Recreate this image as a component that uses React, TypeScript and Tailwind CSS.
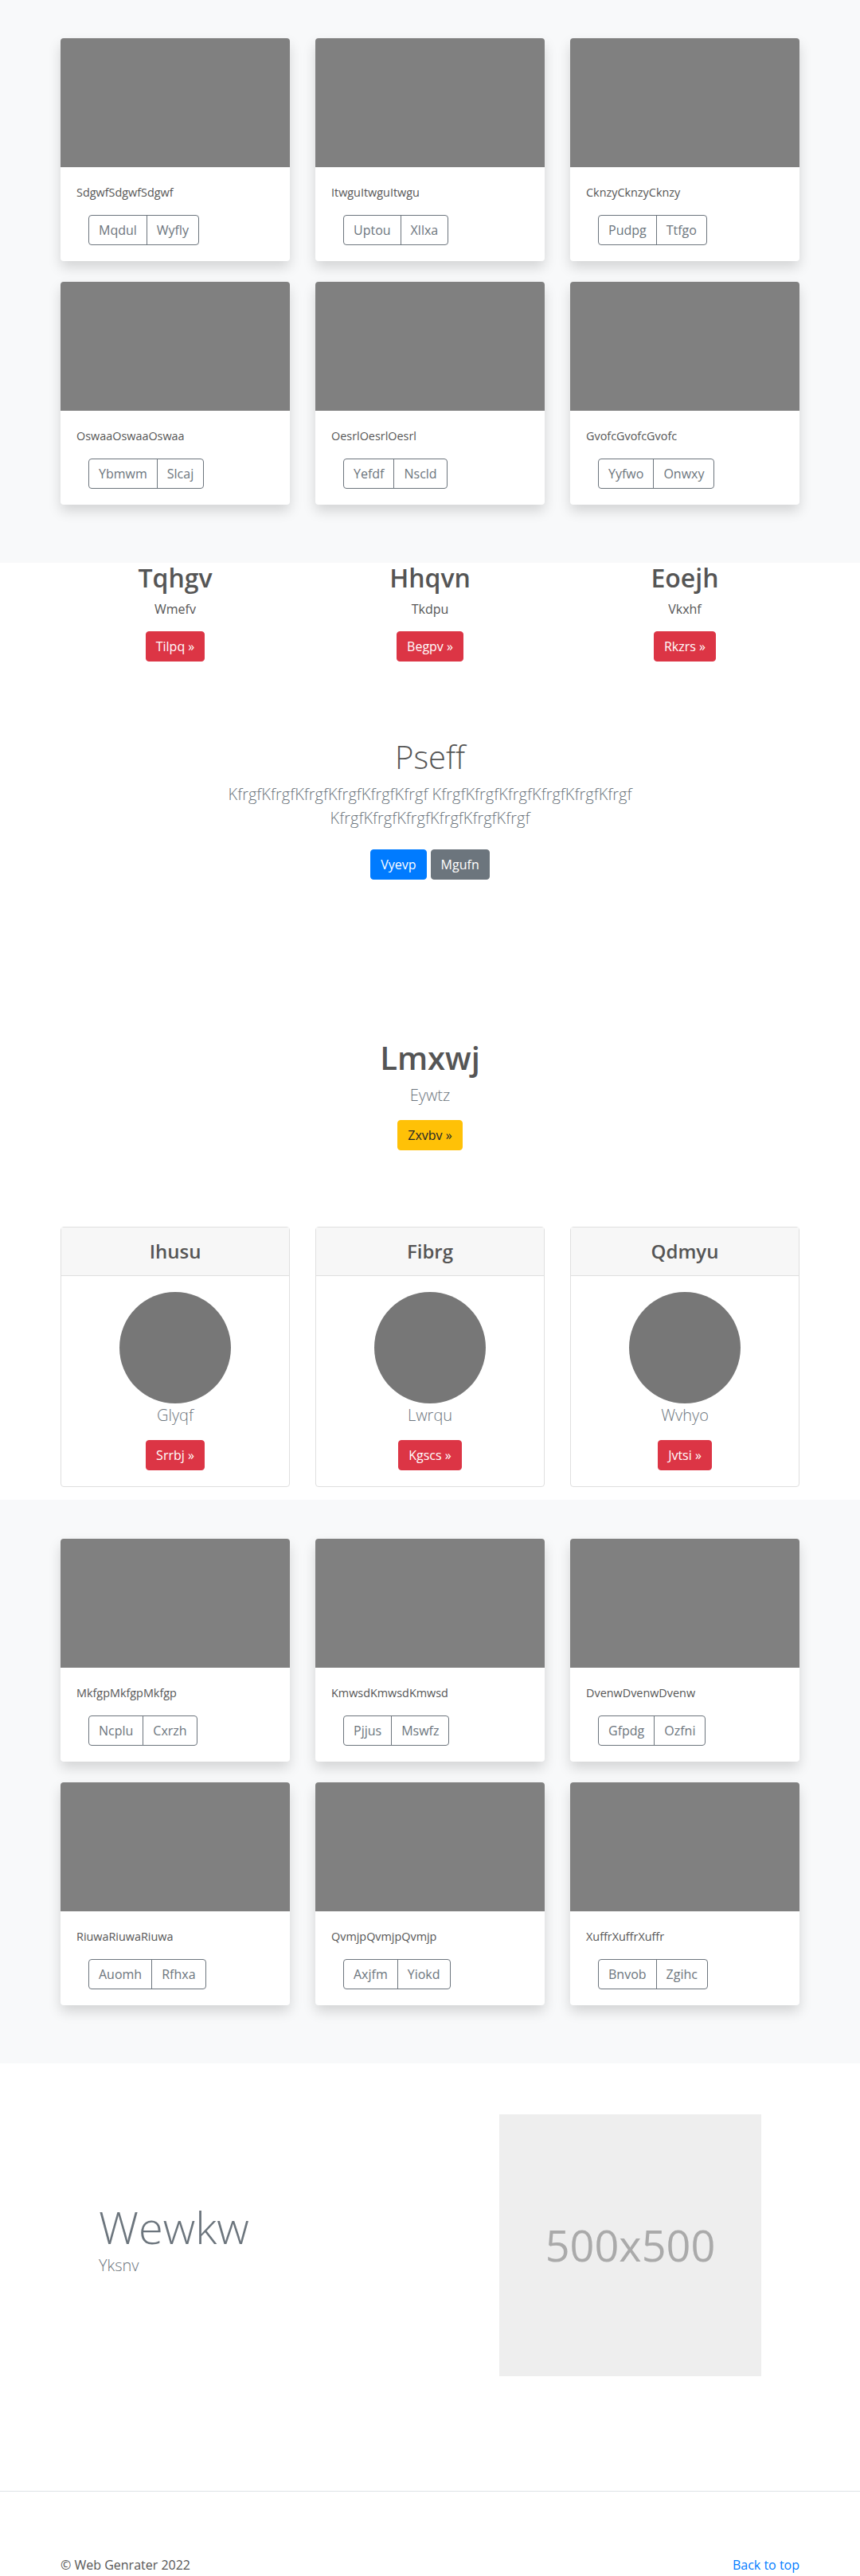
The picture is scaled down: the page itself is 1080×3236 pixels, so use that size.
type Album = { title: string; actions: [string, string] };

const albumTop: Album[] = [
  { title: "SdgwfSdgwfSdgwf", actions: ["Mqdul", "Wyfly"] },
  { title: "ItwguItwguItwgu", actions: ["Uptou", "Xllxa"] },
  { title: "CknzyCknzyCknzy", actions: ["Pudpg", "Ttfgo"] },
  { title: "OswaaOswaaOswaa", actions: ["Ybmwm", "Slcaj"] },
  { title: "OesrlOesrlOesrl", actions: ["Yefdf", "Nscld"] },
  { title: "GvofcGvofcGvofc", actions: ["Yyfwo", "Onwxy"] },
];

const albumBottom: Album[] = [
  { title: "MkfgpMkfgpMkfgp", actions: ["Ncplu", "Cxrzh"] },
  { title: "KmwsdKmwsdKmwsd", actions: ["Pjjus", "Mswfz"] },
  { title: "DvenwDvenwDvenw", actions: ["Gfpdg", "Ozfni"] },
  { title: "RiuwaRiuwaRiuwa", actions: ["Auomh", "Rfhxa"] },
  { title: "QvmjpQvmjpQvmjp", actions: ["Axjfm", "Yiokd"] },
  { title: "XuffrXuffrXuffr", actions: ["Bnvob", "Zgihc"] },
];

const features = [
  { title: "Tqhgv", text: "Wmefv", cta: "Tilpq »" },
  { title: "Hhqvn", text: "Tkdpu", cta: "Begpv »" },
  { title: "Eoejh", text: "Vkxhf", cta: "Rkzrs »" },
];

const people = [
  { title: "Ihusu", text: "Glyqf", cta: "Srrbj »" },
  { title: "Fibrg", text: "Lwrqu", cta: "Kgscs »" },
  { title: "Qdmyu", text: "Wvhyo", cta: "Jvtsi »" },
];

// bootstrap-ish .btn: 1px border, 6px/12px padding, 16px text -> 38px tall
const btn = "inline-block rounded border px-3 py-1.5 align-top text-[16px] leading-6";

function AlbumCard({ title, actions }: Album) {
  return (
    <div className="overflow-hidden rounded bg-white shadow-[0_8px_16px_rgba(0,0,0,0.15)]">
      <div className="h-[162px] bg-[#808080]" />
      <div className="p-5">
        <p className="mb-4 text-[14.4px] leading-6 text-[#555]">{title}</p>
        <div className="ml-[15px] flex w-max rounded border border-[#6c757d] text-[#6c757d]">
          <span className="px-3 py-1.5 text-[16px] leading-6">{actions[0]}</span>
          <span className="border-l border-[#6c757d] px-3 py-1.5 text-[16px] leading-6">
            {actions[1]}
          </span>
        </div>
      </div>
    </div>
  );
}

function AlbumGrid({ items, top }: { items: Album[]; top: string }) {
  return (
    <section className={`bg-[#f8f9fa] ${top} pb-[73px]`}>
      <div className="mx-auto grid w-[928px] grid-cols-3 gap-x-8 gap-y-[26px]">
        {items.map((a) => (
          <AlbumCard key={a.title} {...a} />
        ))}
      </div>
    </section>
  );
}

export default function App() {
  return (
    <div className="bg-white font-['Open_Sans',sans-serif] text-[#555]">
      <AlbumGrid items={albumTop} top="pt-12" />

      <section className="mx-auto grid w-[928px] grid-cols-3 gap-x-8 text-center">
        {features.map((f) => (
          <div key={f.title} className="flex flex-col items-center">
            <h2 className="mb-2 text-[32px] font-semibold leading-[1.2] text-[#555]">{f.title}</h2>
            <p className="mb-4 text-[16px] leading-6">{f.text}</p>
            <span className={`${btn} border-[#dc3545] bg-[#dc3545] text-white`}>{f.cta}</span>
          </div>
        ))}
      </section>

      <section className="flex flex-col items-center pt-24 pb-[200px] text-center">
        <h1 className="mb-2 text-[40px] font-light leading-[48px] text-[#555]">Pseff</h1>
        <p className="mb-4 max-w-[600px] text-[20px] font-light leading-[30px] text-[#6c757d]">
          KfrgfKfrgfKfrgfKfrgfKfrgfKfrgf KfrgfKfrgfKfrgfKfrgfKfrgfKfrgf KfrgfKfrgfKfrgfKfrgfKfrgfKfrgf
        </p>
        <div className="mt-2 flex justify-center gap-[5px]">
          <span className={`${btn} border-[#007bff] bg-[#007bff] text-white`}>Vyevp</span>
          <span className={`${btn} border-[#6c757d] bg-[#6c757d] text-white`}>Mgufn</span>
        </div>
      </section>

      <section className="flex flex-col items-center text-center">
        <h1 className="mb-2 text-[40px] font-semibold leading-[48px] text-[#555]">Lmxwj</h1>
        <p className="mb-4 text-[20px] font-light leading-[30px] text-[#6c757d]">Eywtz</p>
        <span className={`${btn} border-[#ffc107] bg-[#ffc107] text-[#212529]`}>Zxvbv »</span>
      </section>

      <section className="pt-24 pb-4">
        <div className="mx-auto grid w-[928px] grid-cols-3 gap-x-8">
          {people.map((p) => (
            <div key={p.title} className="rounded border border-[#dfdfdf] text-center">
              <div className="border-b border-[#dfdfdf] bg-[#f7f7f7] py-4">
                <h4 className="text-[24px] font-semibold leading-[28px] text-[#555]">{p.title}</h4>
              </div>
              <div className="flex flex-col items-center p-5">
                <div className="h-[140px] w-[140px] rounded-full bg-[#777]" />
                <p className="mb-4 text-[20px] font-light leading-[30px] text-[#6c757d]">{p.text}</p>
                <span className={`${btn} border-[#dc3545] bg-[#dc3545] text-white`}>{p.cta}</span>
              </div>
            </div>
          ))}
        </div>
      </section>

      <AlbumGrid items={albumBottom} top="pt-[49px]" />

      <section className="pt-16 pb-[144px]">
        <div className="mx-auto flex w-[928px] items-center justify-between">
          <div className="pl-12">
            <h1 className="text-[56px] font-light leading-[1.2] text-[#6c757d]">Wewkw</h1>
            <p className="mb-4 text-[20px] font-light leading-[30px] text-[#6c757d]">Yksnv</p>
          </div>
          <div className="mr-12 flex h-[329px] w-[329px] items-center justify-center bg-[#eeeeee]">
            <span className="text-[54px] text-[#aaaaaa]">500x500</span>
          </div>
        </div>
      </section>

      <footer className="border-t border-[#dee2e6] pt-20">
        <div className="mx-auto flex w-[928px] justify-between text-[16px] leading-6">
          <p className="text-[#555]">© Web Genrater 2022</p>
          <a href="#" className="text-[#007bff]">Back to top</a>
        </div>
      </footer>
    </div>
  );
}
